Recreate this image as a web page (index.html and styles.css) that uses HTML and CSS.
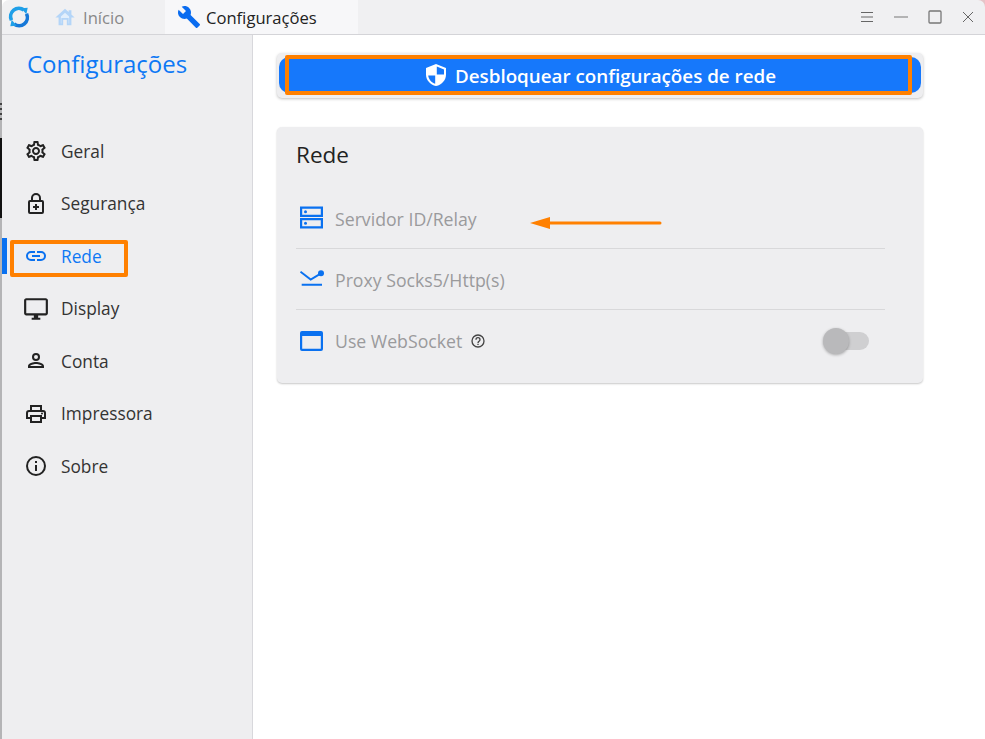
FILE: index.html
```html
<!DOCTYPE html>
<html lang="pt">
<head>
<meta charset="utf-8">
<title>Configurações</title>
<link rel="stylesheet" href="styles.css">
</head>
<body>
<div class="window">
  <header class="titlebar">
    <svg class="logo" viewBox="0 0 24 24" width="22" height="22"><path d="M3.800 15.500A9 9 0 0 1 17.400 4.400" fill="none" stroke="#1f9fe8" stroke-width="4"/><path d="M20.200 8.500A9 9 0 0 1 6.600 19.600" fill="none" stroke="#1678d8" stroke-width="4"/><path d="M14.500 2.500l7-.5-1.500 7zM9.500 21.500l-7 .5 1.500-7z" fill="#1f9fe8"/></svg>
    <div class="tab tab-home">
      <svg class="tab-icon" viewBox="0 0 24 24" width="22" height="22"><path d="M12 3 1.500 12.500H5V21h5v-6h4v6h5v-8.500h3.500L19 9.300V4.500h-3v2z" fill="#b4d5f8"/><path d="M7.500 11.500 12 7.400l4.500 4.100V19h-.5v-6H8v6h-.5z" fill="#e2effc"/></svg>
      <span>Início</span>
    </div>
    <div class="tab tab-active">
      <svg class="tab-icon" viewBox="0 0 24 24" width="24" height="24"><path d="M22.700 19 13.600 9.900c.900-2.300.400-5-1.500-6.900C10.100 1 7.100.6 4.700 1.700L9 6 6 9 1.600 4.700C.4 7.100.9 10.100 2.900 12.100c1.900 1.900 4.600 2.400 6.900 1.500l9.100 9.100c.4.400 1 .4 1.400 0l2.300-2.300c.5-.4.500-1.100.1-1.400z" fill="#0a6cf0"/></svg>
      <span>Configurações</span>
    </div>
    <div class="win-controls">
      <svg viewBox="0 0 14 12" width="14" height="12"><path d="M1 1.500h12M1 6h12M1 10.500h12" stroke="#666" fill="none"/></svg>
      <svg viewBox="0 0 14 12" width="14" height="12"><path d="M0 6h14" stroke="#777" fill="none"/></svg>
      <svg viewBox="0 0 14 14" width="14" height="14"><rect x="1" y="1" width="12" height="12" rx="1" stroke="#777" stroke-width="1.300" fill="none"/></svg>
      <svg viewBox="0 0 12 12" width="12" height="12"><path d="M1 1l10 10M11 1 1 11" stroke="#666" fill="none"/></svg>
    </div>
  </header>
  <div class="body">
    <aside class="sidebar">
      <h1 class="side-title">Configurações</h1>
      <nav class="menu">
        <a class="item">
          <svg viewBox="0 0 24 24" width="24" height="24"><path fill="#222" d="M19.430 12.980c.04-.32.07-.64.07-.98s-.03-.66-.07-.98l2.110-1.650c.19-.15.24-.42.12-.64l-2-3.460c-.12-.22-.39-.3-.61-.22l-2.490 1c-.52-.4-1.080-.73-1.690-.98l-.38-2.650A.49.49 0 0 0 14 2h-4c-.25 0-.46.18-.49.42l-.38 2.650c-.61.25-1.170.59-1.690.98l-2.490-1a.57.57 0 0 0-.18-.03c-.17 0-.34.09-.43.25l-2 3.460c-.13.22-.07.49.12.64l2.110 1.650c-.04.32-.07.650-.07.980s.03.660.07.980l-2.110 1.650c-.19.150-.24.420-.12.640l2 3.460c.12.220.39.300.61.220l2.490-1c.52.400 1.080.730 1.690.980l.38 2.650c.03.240.24.420.49.420h4c.25 0 .46-.18.49-.42l.38-2.650c.61-.25 1.170-.59 1.690-.98l2.490 1c.06.020.12.030.18.030.17 0 .34-.09.43-.25l2-3.460c.12-.22.07-.49-.12-.64zm-1.980-1.710c.04.31.05.52.05.730s-.02.430-.05.730l-.14 1.130.89.700 1.080.840-.7 1.210-1.270-.51-1.040-.42-.9.680c-.43.320-.84.560-1.250.730l-1.060.430-.16 1.130-.2 1.350h-1.400l-.19-1.350-.16-1.130-1.060-.43c-.43-.18-.83-.41-1.230-.71l-.91-.7-1.060.430-1.270.51-.7-1.210 1.080-.84.890-.7-.14-1.130c-.03-.31-.05-.54-.05-.74s.02-.43.05-.73l.14-1.130-.89-.7-1.080-.84.7-1.210 1.270.51 1.040.42.9-.68c.43-.32.840-.56 1.250-.73l1.060-.43.160-1.130.2-1.350h1.390l.19 1.350.16 1.130 1.060.43c.43.18.83.41 1.230.71l.91.7 1.060-.43 1.270-.51.7 1.210-1.070.85-.89.7zM12 8c-2.210 0-4 1.790-4 4s1.790 4 4 4 4-1.790 4-4-1.790-4-4-4zm0 6c-1.100 0-2-.9-2-2s.9-2 2-2 2 .9 2 2-.9 2-2 2z"/></svg>
          <span>Geral</span>
        </a>
        <a class="item">
          <svg viewBox="0 0 24 24" width="24" height="24"><path fill="#222" d="M18 8h-1V6A5 5 0 0 0 7 6v2H6a2 2 0 0 0-2 2v10a2 2 0 0 0 2 2h12a2 2 0 0 0 2-2V10a2 2 0 0 0-2-2zM9 6a3 3 0 0 1 6 0v2H9zm9 14H6V10h12zm-7-2h2v-2h2v-2h-2v-2h-2v2H9v2h2z"/></svg>
          <span>Segurança</span>
        </a>
        <a class="item item-active">
          <svg viewBox="0 0 24 24" width="24" height="24"><path fill="#0a71f0" d="M17 7h-4v2h4a3 3 0 0 1 0 6h-4v2h4a5 5 0 0 0 0-10zm-6 8H7a3 3 0 0 1 0-6h4V7H7a5 5 0 0 0 0 10h4zm-3-4h8v2H8z"/></svg>
          <span>Rede</span>
        </a>
        <a class="item">
          <svg viewBox="0 0 24 24" width="26" height="26"><path fill="#222" d="M21 2H3c-1.100 0-2 .9-2 2v12c0 1.100.9 2 2 2h7v2H8v2h8v-2h-2v-2h7c1.100 0 2-.9 2-2V4c0-1.100-.9-2-2-2zm0 14H3V4h18z"/></svg>
          <span>Display</span>
        </a>
        <a class="item">
          <svg viewBox="0 0 24 24" width="24" height="24"><path fill="#222" d="M12 6a2 2 0 1 1 0 4 2 2 0 0 1 0-4m0 9c2.700 0 5.800 1.290 6 2H6c.23-.72 3.310-2 6-2M12 4a4 4 0 1 0 0 8 4 4 0 0 0 0-8zm0 9c-2.670 0-8 1.340-8 4v2h16v-2c0-2.660-5.330-4-8-4z"/></svg>
          <span>Conta</span>
        </a>
        <a class="item">
          <svg viewBox="0 0 24 24" width="24" height="24"><path fill="#222" d="M19 8h-1V3H6v5H5a3 3 0 0 0-3 3v6h4v4h12v-4h4v-6a3 3 0 0 0-3-3zM8 5h8v3H8zm8 14H8v-4h8zm4-4h-2v-2H6v2H4v-4a1 1 0 0 1 1-1h14a1 1 0 0 1 1 1z"/><circle cx="18" cy="11.500" r="1" fill="#222"/></svg>
          <span>Impressora</span>
        </a>
        <a class="item">
          <svg viewBox="0 0 24 24" width="24" height="24"><path fill="#222" d="M11 7h2v2h-2zm0 4h2v6h-2zm1-9a10 10 0 1 0 0 20 10 10 0 0 0 0-20zm0 18a8 8 0 1 1 0-16 8 8 0 0 1 0 16z"/></svg>
          <span>Sobre</span>
        </a>
      </nav>
    </aside>
    <main class="content">
      <div class="unlock-card">
        <button class="unlock-btn" type="button">
          <svg viewBox="0 0 24 24" width="24" height="24"><path fill="#fff" d="M12 1 2 5v6.500C2 17 6 21.800 12 23c6-1.200 10-6 10-11.500V5z"/><path fill="#1678fb" d="M12.800 3.400 20 6.400v5.100h-7.200zM11.200 12.500H4.200c.5 3.900 3.300 7.200 7 8.300z"/></svg>
          <span class="unlock-text">Desbloquear configurações de rede</span>
        </button>
      </div>
      <section class="card">
        <h2 class="card-title">Rede</h2>
        <div class="row row-first">
          <svg viewBox="0 0 24 24" width="24" height="24"><path fill="#0a71f0" d="M0 .5h23V11H0zm2.200 2.200v6.100h18.600V2.700zM0 12h23v10.500H0zm2.200 2.200v6.100h18.600v-6.100z"/><circle cx="5.500" cy="5.700" r="1.500" fill="#0a71f0"/><circle cx="5.500" cy="17.300" r="1.500" fill="#0a71f0"/></svg>
          <span class="label">Servidor ID/Relay</span>
        </div>
        <div class="row">
          <svg viewBox="0 0 24 24" width="24" height="24"><path fill="none" stroke="#0a71f0" stroke-width="2" d="M.5 4.700 10.700 12.500 21 6.300M1.700 17.700H22"/><circle cx="21" cy="6.300" r="3" fill="#0a71f0"/></svg>
          <span class="label">Proxy Socks5/Http(s)</span>
        </div>
        <div class="row row-last">
          <svg viewBox="0 0 24 24" width="24" height="24"><path fill="#0a71f0" d="M2 2h19a2 2 0 0 1 2 2v16a2 2 0 0 1-2 2H2a2 2 0 0 1-2-2V4a2 2 0 0 1 2-2zm.2 5v12.800h18.600V7z"/></svg>
          <span class="label">Use WebSocket</span>
          <svg class="help" viewBox="0 0 24 24" width="16" height="16"><path fill="#444" d="M11 18h2v-2h-2zm1-16a10 10 0 1 0 0 20 10 10 0 0 0 0-20zm0 18a8 8 0 1 1 0-16 8 8 0 0 1 0 16zm0-14a4 4 0 0 0-4 4h2a2 2 0 1 1 4 0c0 2-3 1.750-3 5h2c0-2.250 3-2.500 3-5a4 4 0 0 0-4-4z"/></svg>
          <div class="toggle"><div class="knob"></div></div>
        </div>
      </section>
    </main>
  </div>
  <div class="mark mark-side"></div>
  <div class="mark mark-dash"></div>
  <div class="mark mark-rede"></div>
  <div class="mark mark-btn"></div>
  <svg class="mark-arrow" viewBox="0 0 134 14" width="134" height="14"><path d="M0 7 20 1v4.500h110a1.500 1.500 0 0 1 0 3H20V13z" fill="#ff8000"/></svg>
</div>
</body>
</html>
```

FILE: styles.css
```css
* { box-sizing: border-box; }
html, body { margin: 0; height: 100%; background: #fff; }
body { font-family: "Open Sans", "Noto Sans", "Liberation Sans", sans-serif; color: #222; overflow: hidden; }
.window { position: relative; width: 985px; height: 739px; display: flex; flex-direction: column; border-left: 2px solid #b4b4b6; background: linear-gradient(90deg, #fff 50%, #e6c4c8 50%); }
.titlebar { height: 35px; flex: none; display: flex; align-items: center; background: #f0f0f2; border-bottom: 1px solid #d4d4d8; border-radius: 7px 7px 0 0; padding-left: 6px; }
.logo { flex: none; }
.tab { display: flex; align-items: center; height: 34px; font-size: 16.600px; }
.tab-home { width: 135px; padding-left: 24px; gap: 7px; color: #888; }
.tab-active { width: 193px; padding-left: 12px; gap: 5px; background: #f7f7f9; color: #222; }
.win-controls { margin-left: auto; display: flex; align-items: center; gap: 20px; padding-right: 11px; }
.body { flex: 1; display: flex; min-height: 0; }
.sidebar { width: 251px; flex: none; background: #eeeef0; border-right: 1px solid #d8d8dc; }
.side-title { margin: 13px 0 0 25px; font-size: 24px; font-weight: 400; line-height: 32px; color: #0d78f5; }
.menu { margin-top: 45px; display: flex; flex-direction: column; }
.item { height: 52.500px; display: flex; align-items: center; font-size: 17.300px; color: #333; padding-left: 21px; position: relative; }
.item svg { width: 26px; flex: none; }
.item span { margin-left: 12px; }
.item-active { color: #0d78f5; }
.item-active::before { content: ""; position: absolute; left: 0; top: 8px; width: 5px; height: 36px; background: #0a71f0; }
.content { flex: 1; padding: 18px 0 0 24px; background: #fff; }
.unlock-card { width: 646px; height: 45px; padding: 4px 2px 5px; background: #eeeef0; border-radius: 5px; box-shadow: 0 1px 3px rgba(0,0,0,.25); }
.unlock-btn { width: 100%; height: 36px; border: 0; border-radius: 10px; background: #1678fb; color: #fff; display: flex; align-items: center; justify-content: center; gap: 7px; font: 600 18.800px "Open Sans", "Noto Sans", sans-serif; padding: 0; }
.unlock-text { padding-top: 1px; }
.card { width: 646px; height: 256px; margin-top: 29px; padding: 12px 38px 0 19px; background: #eeeef0; border-radius: 5px; box-shadow: 0 1px 2px rgba(0,0,0,.22); }
.card-title { margin: 0; font-size: 22.500px; font-weight: 400; line-height: 32px; color: #222; }
.row { height: 61px; display: flex; align-items: center; gap: 11px; padding-left: 4px; border-bottom: 1px solid #d8d8da; }
.row-first { height: 64px; margin-top: 14px; padding-top: 3px; }
.row-last { border-bottom: 0; }
.label { font-size: 17.700px; color: #9a9a9c; padding-top: 1px; }
.help { margin-left: -3px; }
.toggle { position: relative; margin-left: auto; margin-right: 16px; width: 34px; height: 18px; border-radius: 9px; background: #cfcfd1; }
.knob { position: absolute; left: -12px; top: -4px; width: 26px; height: 26px; border-radius: 50%; background: #b9b9bb; box-shadow: 0 1px 3px rgba(0,0,0,.3); }
.mark { position: absolute; border: 4px solid #ff8000; border-radius: 2px; pointer-events: none; }
.mark-rede { left: 8px; top: 240px; width: 118px; height: 37px; }
.mark-btn { left: 283px; top: 55px; width: 627px; height: 40px; }
.mark-side { left: -2px; top: 138px; width: 2px; height: 80px; border: 0; background: #111; border-radius: 0; }
.mark-dash { left: -2px; top: 103px; width: 2px; height: 18px; border: 0; border-radius: 0; background: repeating-linear-gradient(180deg, #444 0 2px, transparent 2px 5px); }
.mark-arrow { position: absolute; left: 528px; top: 216px; }
```
